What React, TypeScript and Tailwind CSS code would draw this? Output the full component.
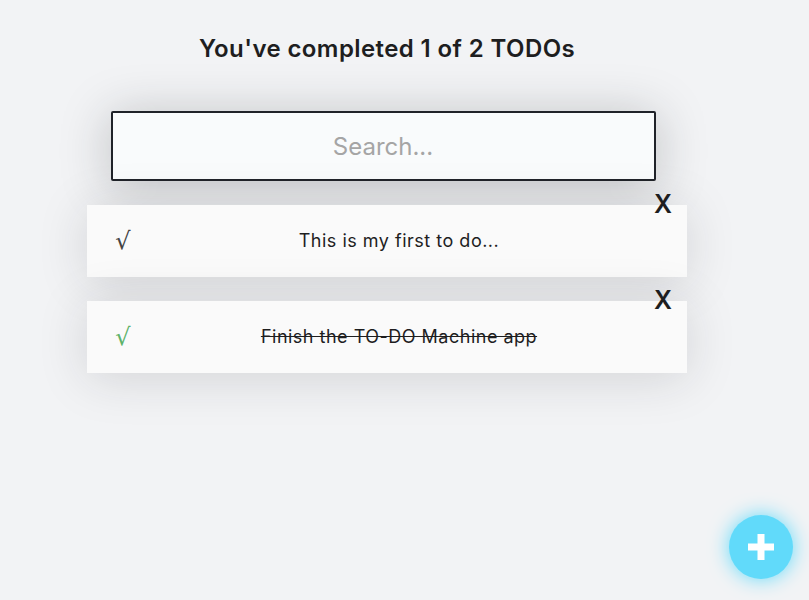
import React from "react";

const todos = [
  { text: "This is my first to do...", completed: false },
  { text: "Finish the TO-DO Machine app", completed: true },
];

export default function App() {
  return (
    <div className="min-h-[600px] w-full bg-[#F2F3F5] text-[#1E1E1F]" style={{ fontFamily: "Inter, 'Open Sans', sans-serif" }}>
      <div className="w-[774px]">
        <h1 className="m-0 pt-[34px] pb-[48px] text-center text-[24px] font-semibold leading-[29px] tracking-[0.4px]">
          You've completed 1 of 2 TODOs
        </h1>
        <div className="flex justify-center pr-[8px]">
          <input
            placeholder="Search..."
            className="h-[70px] w-[545px] rounded-[2px] border-2 border-[#202329] bg-[#F9FBFC] text-center text-[24px] text-[#1E1E1F] shadow-[0px_5px_50px_rgba(32,35,41,0.25)] outline-none placeholder:text-[#A5A5A5]"
          />
        </div>
        <ul className="m-0 flex list-none flex-col items-center p-0">
          {todos.map((t) => (
            <li
              key={t.text}
              className="relative mt-[24px] flex w-[600px] items-center justify-center bg-[#FAFAFA] shadow-[0px_5px_50px_rgba(32,35,41,0.15)]"
            >
              <span
                className={`absolute left-[12px] flex h-[48px] w-[48px] items-center justify-center text-[24px] ${t.completed ? "text-[#5DB36A]" : "text-[#444]"}`}
                style={{ fontFamily: "'DejaVu Serif', serif" }}
              >
                √
              </span>
              <p
                className={`my-[24px] ml-[24px] w-[480px] text-center text-[18px] leading-[24px] tracking-[0.5px] ${t.completed ? "line-through" : ""}`}
              >
                {t.text}
              </p>
              <span className="absolute right-0 top-[-24px] flex h-[48px] w-[48px] items-center justify-center text-[25px] font-semibold">
                X
              </span>
            </li>
          ))}
        </ul>
      </div>
      <button className="fixed bottom-[21px] right-[16px] flex h-[64px] w-[64px] items-center justify-center rounded-full bg-[#61DAFA] shadow-[0px_0px_20px_#61DAFA]">
        <svg width="28" height="28" viewBox="0 0 28 28">
          <rect x="10.5" y="1" width="7" height="26" fill="white" />
          <rect x="1" y="10.5" width="26" height="7" fill="white" />
        </svg>
      </button>
    </div>
  );
}
